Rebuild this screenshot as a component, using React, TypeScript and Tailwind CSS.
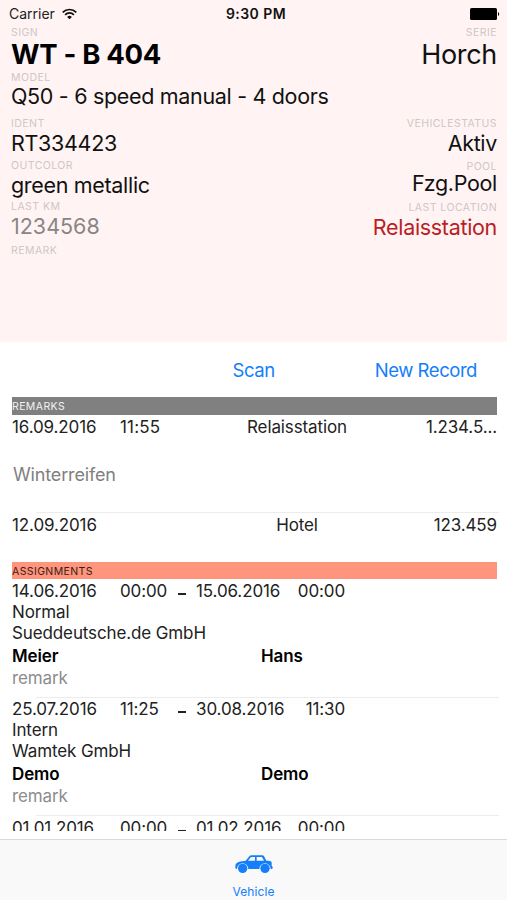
import type { FC, ReactNode } from 'react'
import clsx from 'clsx'

interface Remark {
  date: string
  time?: string
  location: string
  km: string
  note?: string
}

interface Assignment {
  from: [string, string]
  to: [string, string]
  kind: string
  company: string
  lastName: string
  firstName: string
}

const remarks: Remark[] = [
  { date: '16.09.2016', time: '11:55', location: 'Relaisstation', km: '1.234.5...', note: 'Winterreifen' },
  { date: '12.09.2016', location: 'Hotel', km: '123.459' },
]

const assignments: Assignment[] = [
  {
    from: ['14.06.2016', '00:00'],
    to: ['15.06.2016', '00:00'],
    kind: 'Normal',
    company: 'Sueddeutsche.de GmbH',
    lastName: 'Meier',
    firstName: 'Hans',
  },
  {
    from: ['25.07.2016', '11:25'],
    to: ['30.08.2016', '11:30'],
    kind: 'Intern',
    company: 'Wamtek GmbH',
    lastName: 'Demo',
    firstName: 'Demo',
  },
  {
    from: ['01.01.2016', '00:00'],
    to: ['01.02.2016', '00:00'],
    kind: '',
    company: '',
    lastName: '',
    firstName: '',
  },
]

const Field: FC<{ label: string, className?: string, valueClass?: string, children?: ReactNode }> = props => (
  <div className={props.className}>
    <div className="h-3 text-[10.5px] leading-[14px] tracking-[0.45px] text-[#cfc6c7]">{props.label}</div>
    {props.children && (
      <div className={clsx('whitespace-nowrap', props.valueClass)}>{props.children}</div>
    )}
  </div>
)

const StatusBar: FC = () => (
  <div className="grid h-[26px] grid-cols-3 items-center pt-[2px] pr-[7px] pl-[9px] text-[14px] leading-4 text-[#222]">
    <div className="flex items-center gap-[7px]">
      <span>Carrier</span>
      <svg width="15" height="12" viewBox="0 0 15 12" fill="none" stroke="#111" strokeWidth="1.7">
        <path d="M.7 4.3a9.6 9.6 0 0 1 13.6 0" />
        <path d="M3.1 6.8a6.2 6.2 0 0 1 8.8 0" />
        <path d="M7.5 11.3 5.1 8.9a3.4 3.4 0 0 1 4.8 0z" fill="#111" stroke="none" />
      </svg>
    </div>
    <div className="pl-[3px] text-center font-semibold tracking-[0.45px] text-[#111]">9:30 PM</div>
    <svg className="ml-auto" width="30" height="12" viewBox="0 0 30 12">
      <rect width="27" height="12" rx="1.6" />
      <path d="M28 4c1.6.6 1.6 3.4 0 4z" />
    </svg>
  </div>
)

const VehicleHeader: FC = () => (
  <header className="h-[342px] bg-[#fff4f3]">
    <StatusBar />
    <div className="flex justify-between pr-[10px] pl-[11px] text-[21.5px] tracking-[-0.32px] text-[#111]">
      <div>
        <Field label="SIGN" valueClass="text-[27.5px] leading-[33px] font-bold text-black">WT - B 404</Field>
        <Field label="MODEL" valueClass="leading-[26px]">Q50 - 6 speed manual - 4 doors</Field>
        <Field label="IDENT" className="mt-2" valueClass="leading-7">RT334423</Field>
        <Field label="OUTCOLOR" className="mt-[2px]" valueClass="leading-[29px]">green metallic</Field>
        <Field label="LAST KM" valueClass="leading-7 tracking-normal text-[#8a8585]">1234568</Field>
        <Field label="REMARK" className="mt-1" />
      </div>
      <div className="text-right">
        <Field label="SERIE" valueClass="text-[27px] leading-[34px]">Horch</Field>
        <Field label="VEHICLESTATUS" className="mt-[45px]" valueClass="leading-7">Aktiv</Field>
        <Field label="POOL" className="mt-[3px]" valueClass="leading-[23px]">Fzg.Pool</Field>
        <Field label="LAST LOCATION" className="mt-[6px]" valueClass="leading-7 text-[#b9201f]">Relaisstation</Field>
      </div>
    </div>
  </header>
)

const RemarkRow: FC<{ remark: Remark }> = ({ remark }) => (
  <>
    <div className="grid h-[22px] grid-cols-[108px_96px_162px_1fr] items-center">
      <span>{remark.date}</span>
      <span className="tracking-[0.2px]">{remark.time}</span>
      <span className="text-center">{remark.location}</span>
      <span className="text-right">{remark.km}</span>
    </div>
    {remark.note && (
      <p className="h-[75px] pt-[26px] pl-[1px] text-[18px] leading-6 tracking-[-0.15px] text-[#808080]">{remark.note}</p>
    )}
  </>
)

const AssignmentRow: FC<{ assignment: Assignment }> = ({ assignment: { from, to, kind, company, lastName, firstName } }) => (
  <div className="h-[117.5px] pt-[1.5px] leading-[21px]">
    <div className="grid grid-cols-[108px_47px_29px_88px_61px] items-center">
      <span>{from[0]}</span>
      <span>{from[1]}</span>
      <span className="mx-auto mt-[5px] h-[2px] w-2 bg-[#222]" />
      <span>{to[0]}</span>
      <span className="text-right">{to[1]}</span>
    </div>
    <div className="h-[21px]">{kind}</div>
    <div className="h-[22px]">{company}</div>
    <div className="grid h-[23px] grid-cols-[249px_1fr] pt-[1px] font-semibold text-black">
      <span>{lastName}</span>
      <span>{firstName}</span>
    </div>
    <div className="text-[#8c8c8c]">remark</div>
  </div>
)

const Separator: FC = () => <div className="-mr-[2px] ml-6 h-px bg-[#ececec]" />

const CarIcon: FC = () => (
  <svg width="38" height="18" viewBox="0 0 114 54">
    <path
      fill="#147efb"
      fillRule="evenodd"
      d="M3 26c3-5 14-8 29-9L43 4c2-2 4-3 7-3h30c4 0 6 1 8 4l6 12c8 0 15 1 16 5v11c2 1 3 2 3 5s-2 4-5 4h-1a17 17 0 0 0-34 0H40a17 17 0 0 0-34 0C2 42 1 40 1 37c0-4 0-8 2-11zM39 17h21V6H50c-2 0-3 1-4 2zM65 17h22l-5-9c-1-2-2-2-4-2H65z"
    />
    <circle cx="23" cy="40" r="14" fill="#147efb" />
    <circle cx="90" cy="40" r="14" fill="#147efb" />
  </svg>
)

export default function App() {
  return (
    <div className="flex h-[900px] w-[507px] flex-col overflow-hidden bg-white font-[Inter,'Liberation_Sans',sans-serif]">
      <VehicleHeader />
      <div className="flex h-[55px] items-center justify-end gap-[100px] pt-[2px] pr-[30px] text-[18.5px] tracking-[-0.45px] text-[#147efb]">
        <button>Scan</button>
        <button>New Record</button>
      </div>
      <main className="h-[434px] overflow-hidden pr-[10px] pl-3 text-[17px] tracking-[-0.12px] text-[#222]">
        <h2 className="h-[18px] bg-[#808080] text-[10.5px] leading-[19px] tracking-[0.4px] text-[#f2f2f2]">REMARKS</h2>
        <ul className="h-[147px]">
          {remarks.map((remark, i) => (
            <li key={i}>
              {i > 0 && <Separator />}
              <RemarkRow remark={remark} />
            </li>
          ))}
        </ul>
        <h2 className="h-[17px] bg-[#ff957d] text-[10.5px] leading-[19px] tracking-[0.4px] text-[#3a1c15]">ASSIGNMENTS</h2>
        <ul>
          {assignments.map((assignment, i) => (
            <li key={i}>
              {i > 0 && <Separator />}
              <AssignmentRow assignment={assignment} />
            </li>
          ))}
        </ul>
      </main>
      <nav className="mt-auto flex h-[61px] flex-col items-center border-t border-[#d9d9d9] bg-[#f9f9f9] pt-[15px] text-[#147efb]">
        <CarIcon />
        <span className="mt-[11px] text-[12px] leading-4 tracking-[0.1px]">Vehicle</span>
      </nav>
    </div>
  )
}
